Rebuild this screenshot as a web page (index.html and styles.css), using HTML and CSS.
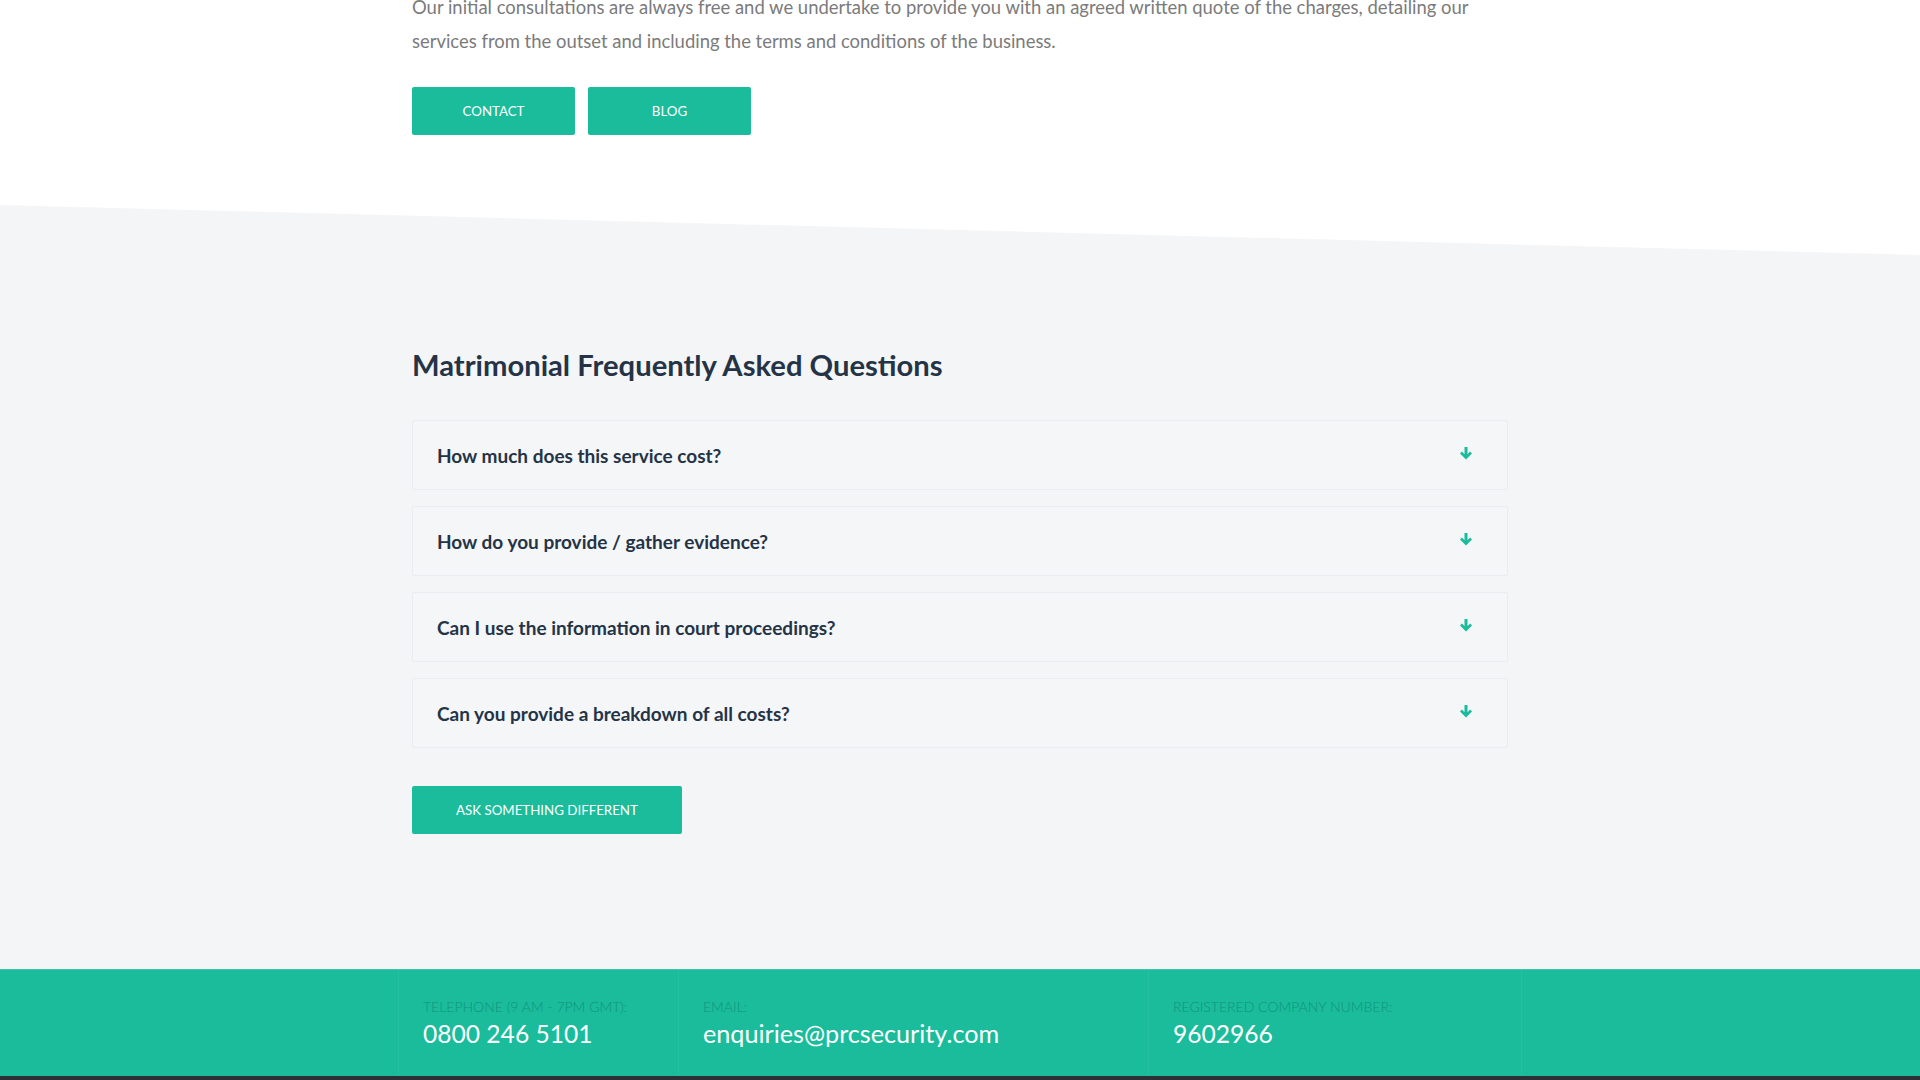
FILE: index.html
```html
<!DOCTYPE html>
<html lang="en">
<head>
<meta charset="utf-8">
<title>Matrimonial FAQ</title>
<link rel="stylesheet" href="styles.css">
</head>
<body>
<section class="intro">
  <div class="container">
    <p class="intro-text">Our initial consultations are always free and we undertake to provide you with an agreed written quote of the charges, detailing our services from the outset and including the terms and conditions of the business.</p>
    <div class="btn-row">
      <a class="btn" href="#">CONTACT</a>
      <a class="btn" href="#">BLOG</a>
    </div>
  </div>
</section>

<section class="faq">
  <div class="container">
    <h2 class="faq-title">Matrimonial Frequently Asked Questions</h2>
    <div class="faq-list">
      <div class="faq-item"><span class="faq-q">How much does this service cost?</span><svg class="faq-arrow" viewBox="0 0 12 13" width="12" height="13"><path d="M4.5 0h3v7.2l2.6-2.6 1.9 1.9L6 12.5 0 6.5l1.9-1.9 2.6 2.6z" fill="#1abc9c"/></svg></div>
      <div class="faq-item"><span class="faq-q">How do you provide / gather evidence?</span><svg class="faq-arrow" viewBox="0 0 12 13" width="12" height="13"><path d="M4.5 0h3v7.2l2.6-2.6 1.9 1.9L6 12.5 0 6.5l1.9-1.9 2.6 2.6z" fill="#1abc9c"/></svg></div>
      <div class="faq-item"><span class="faq-q">Can I use the information in court proceedings?</span><svg class="faq-arrow" viewBox="0 0 12 13" width="12" height="13"><path d="M4.5 0h3v7.2l2.6-2.6 1.9 1.9L6 12.5 0 6.5l1.9-1.9 2.6 2.6z" fill="#1abc9c"/></svg></div>
      <div class="faq-item"><span class="faq-q">Can you provide a breakdown of all costs?</span><svg class="faq-arrow" viewBox="0 0 12 13" width="12" height="13"><path d="M4.5 0h3v7.2l2.6-2.6 1.9 1.9L6 12.5 0 6.5l1.9-1.9 2.6 2.6z" fill="#1abc9c"/></svg></div>
    </div>
    <a class="btn btn-wide" href="#">ASK SOMETHING DIFFERENT</a>
  </div>
</section>

<footer class="contact-bar">
  <div class="contact-row">
    <div class="contact-col col-tel">
      <div class="contact-label">TELEPHONE (9 AM - 7PM GMT):</div>
      <div class="contact-value">0800 246 5101</div>
    </div>
    <div class="contact-col col-mail">
      <div class="contact-label">EMAIL:</div>
      <div class="contact-value contact-value-wide">enquiries@prcsecurity.com</div>
    </div>
    <div class="contact-col col-reg">
      <div class="contact-label">REGISTERED COMPANY NUMBER:</div>
      <div class="contact-value">9602966</div>
    </div>
  </div>
</footer>
<div class="bottom-bar"></div>
</body>
</html>
```
FILE: styles.css
```css
* { box-sizing: border-box; }
html, body { margin: 0; padding: 0; }
body {
  font-family: Lato, "Open Sans", "Liberation Sans", sans-serif;
  background: #ffffff;
  color: #7a7a7a;
  overflow: hidden;
}
.container {
  width: 1096px;
  margin: 0 auto;
}
.intro-text {
  margin: -10px 0 0 0;
  font-size: 18.45px;
  line-height: 34px;
  color: #7b7b7b;
  width: 1075px;
}
.btn-row {
  display: flex;
  gap: 13px;
  margin-top: 29px;
}
.btn {
  display: inline-flex;
  align-items: center;
  justify-content: center;
  min-width: 163px;
  height: 48px;
  padding: 0 43px;
  background: #1abc9c;
  color: #ffffff;
  font-size: 13.3px;
  text-decoration: none;
  border-radius: 2px;
  letter-spacing: 0;
}
.faq {
  margin-top: 70px;
  background: #f4f5f7;
  clip-path: polygon(0 0, 100% 50px, 100% 100%, 0 100%);
  padding: 143px 0 135px;
}
.faq-title {
  margin: 0 0 38px 0;
  font-size: 29.2px;
  line-height: 34px;
  font-weight: 700;
  color: #243446;
}
.faq-list {
  display: flex;
  flex-direction: column;
  gap: 16px;
  margin-bottom: 38px;
}
.faq-item {
  height: 70px;
  display: flex;
  align-items: center;
  justify-content: space-between;
  padding: 0 35px 0 24px;
  border: 1px solid #eaecef;
  border-radius: 2px;
  background: #f5f6f8;
}
.faq-q {
  font-size: 19px;
  font-weight: 700;
  color: #243446;
}
.faq-arrow {
  display: block;
  margin-top: -4px;
}
.btn-wide {
  height: 48px;
  padding: 0 44px;
}
.contact-bar {
  background: #1abc9c;
  border-top: 1px solid #3cc6aa;
  height: 107px;
}
.contact-row {
  width: 1124px;
  margin: 0 auto;
  display: grid;
  grid-template-columns: 280px 470px 374px;
  height: 100%;
}
.contact-col {
  border-left: 1px solid #25c0a2;
  padding: 28px 0 0 24px;
}
.col-reg {
  border-right: 1px solid #25c0a2;
}
.contact-label {
  font-size: 14px;
  line-height: 17px;
  font-weight: 300;
  color: #11937a;
  text-transform: uppercase;
}
.contact-value {
  margin-top: 3px;
  font-size: 24.6px;
  line-height: 31px;
  color: #ffffff;
}
.contact-value-wide {
  font-size: 25.2px;
}
.bottom-bar {
  height: 40px;
  background: #2d3136;
}
```
